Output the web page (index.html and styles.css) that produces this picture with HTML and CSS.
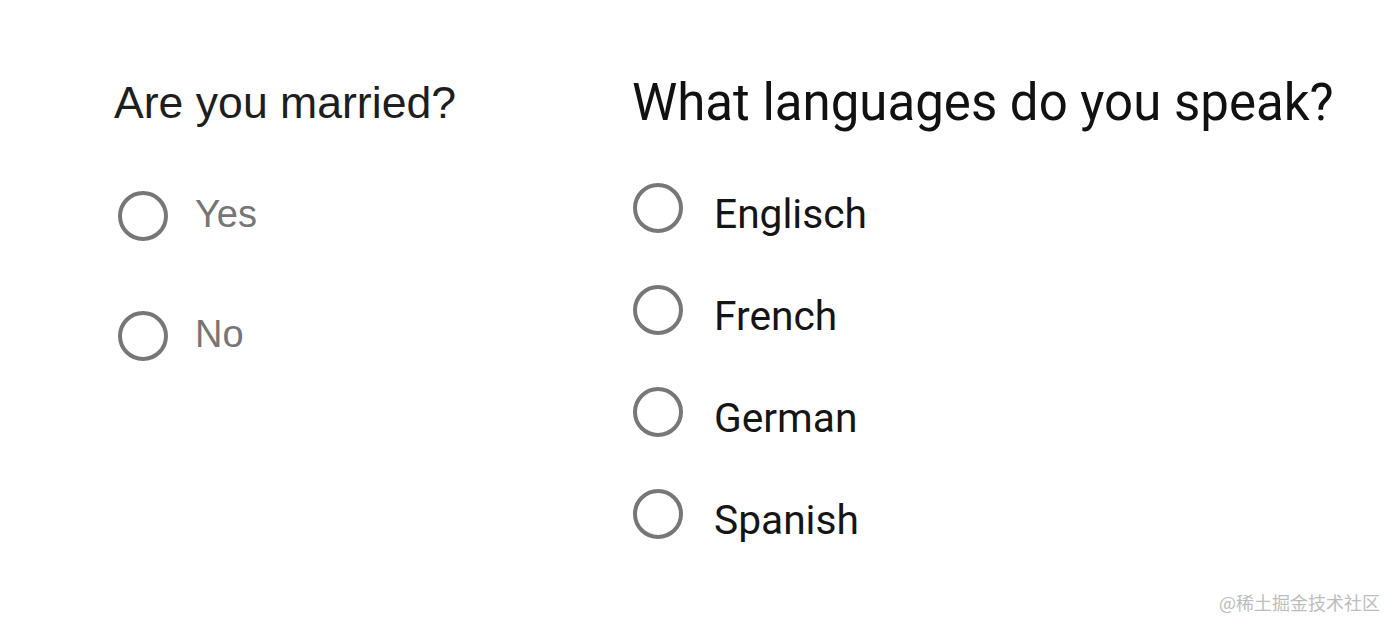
FILE: index.html
```html
<!DOCTYPE html>
<html lang="en">
<head>
<meta charset="utf-8">
<title>Radio questions</title>
<link rel="stylesheet" href="styles.css">
</head>
<body>
<main class="page">
  <section class="question question-married">
    <h2 class="q-title">Are you married?</h2>
    <div class="options">
      <label class="option"><span class="radio"></span><span class="label">Yes</span></label>
      <label class="option"><span class="radio"></span><span class="label">No</span></label>
    </div>
  </section>
  <section class="question question-lang">
    <h2 class="q-title">What languages do you speak?</h2>
    <div class="options">
      <label class="option"><span class="radio"></span><span class="label">Englisch</span></label>
      <label class="option"><span class="radio"></span><span class="label">French</span></label>
      <label class="option"><span class="radio"></span><span class="label">German</span></label>
      <label class="option"><span class="radio"></span><span class="label">Spanish</span></label>
    </div>
  </section>
</main>
<div class="watermark">@稀土掘金技术社区</div>
</body>
</html>
```
FILE: styles.css
```css
html, body {
  margin: 0;
  padding: 0;
  background: #ffffff;
  width: 1400px;
  height: 631px;
  overflow: hidden;
}

.page {
  display: flex;
  padding-top: 78px;
}

.question {
  display: flex;
  flex-direction: column;
}

.q-title {
  margin: 0;
  font-weight: normal;
}

.option {
  display: flex;
  height: 50px;
}

.radio {
  box-sizing: border-box;
  flex: none;
  width: 50px;
  height: 50px;
  border: 4px solid #777777;
  border-radius: 50%;
}

.label {
  display: block;
  white-space: nowrap;
}

/* Left question */
.question-married {
  margin-left: 114px;
  width: 519px;
}

.question-married .q-title {
  font-family: "Liberation Sans", Arial, sans-serif;
  font-size: 44.6px;
  line-height: 44px;
  color: #1e1e1e;
  padding-top: 3px;
}

.question-married .options {
  margin-top: 66px;
  display: flex;
  flex-direction: column;
  gap: 70px;
  padding-left: 4px;
}

.question-married .option {
  align-items: center;
}

.question-married .label {
  font-family: "Liberation Sans", Arial, sans-serif;
  font-size: 38px;
  line-height: 38px;
  color: #767676;
  margin-left: 27px;
  margin-top: -5px;
}

/* Right question */
.question-lang .q-title {
  font-family: Roboto, "Noto Sans", sans-serif;
  font-size: 51px;
  line-height: 51px;
  color: #111111;
  margin-top: -1px;
  margin-left: -1px;
}

.question-lang .options {
  margin-top: 55px;
  display: flex;
  flex-direction: column;
  gap: 52px;
}

.question-lang .option {
  align-items: flex-start;
}

.question-lang .label {
  font-family: Roboto, "Noto Sans", sans-serif;
  font-size: 40.7px;
  line-height: 41px;
  color: #151515;
  margin-left: 31px;
  margin-top: 11px;
}

.watermark {
  position: absolute;
  left: 1219px;
  top: 591px;
  font-family: "Noto Sans CJK SC", "Noto Sans", sans-serif;
  font-size: 18px;
  line-height: 22px;
  color: #bdbdbd;
}
```
